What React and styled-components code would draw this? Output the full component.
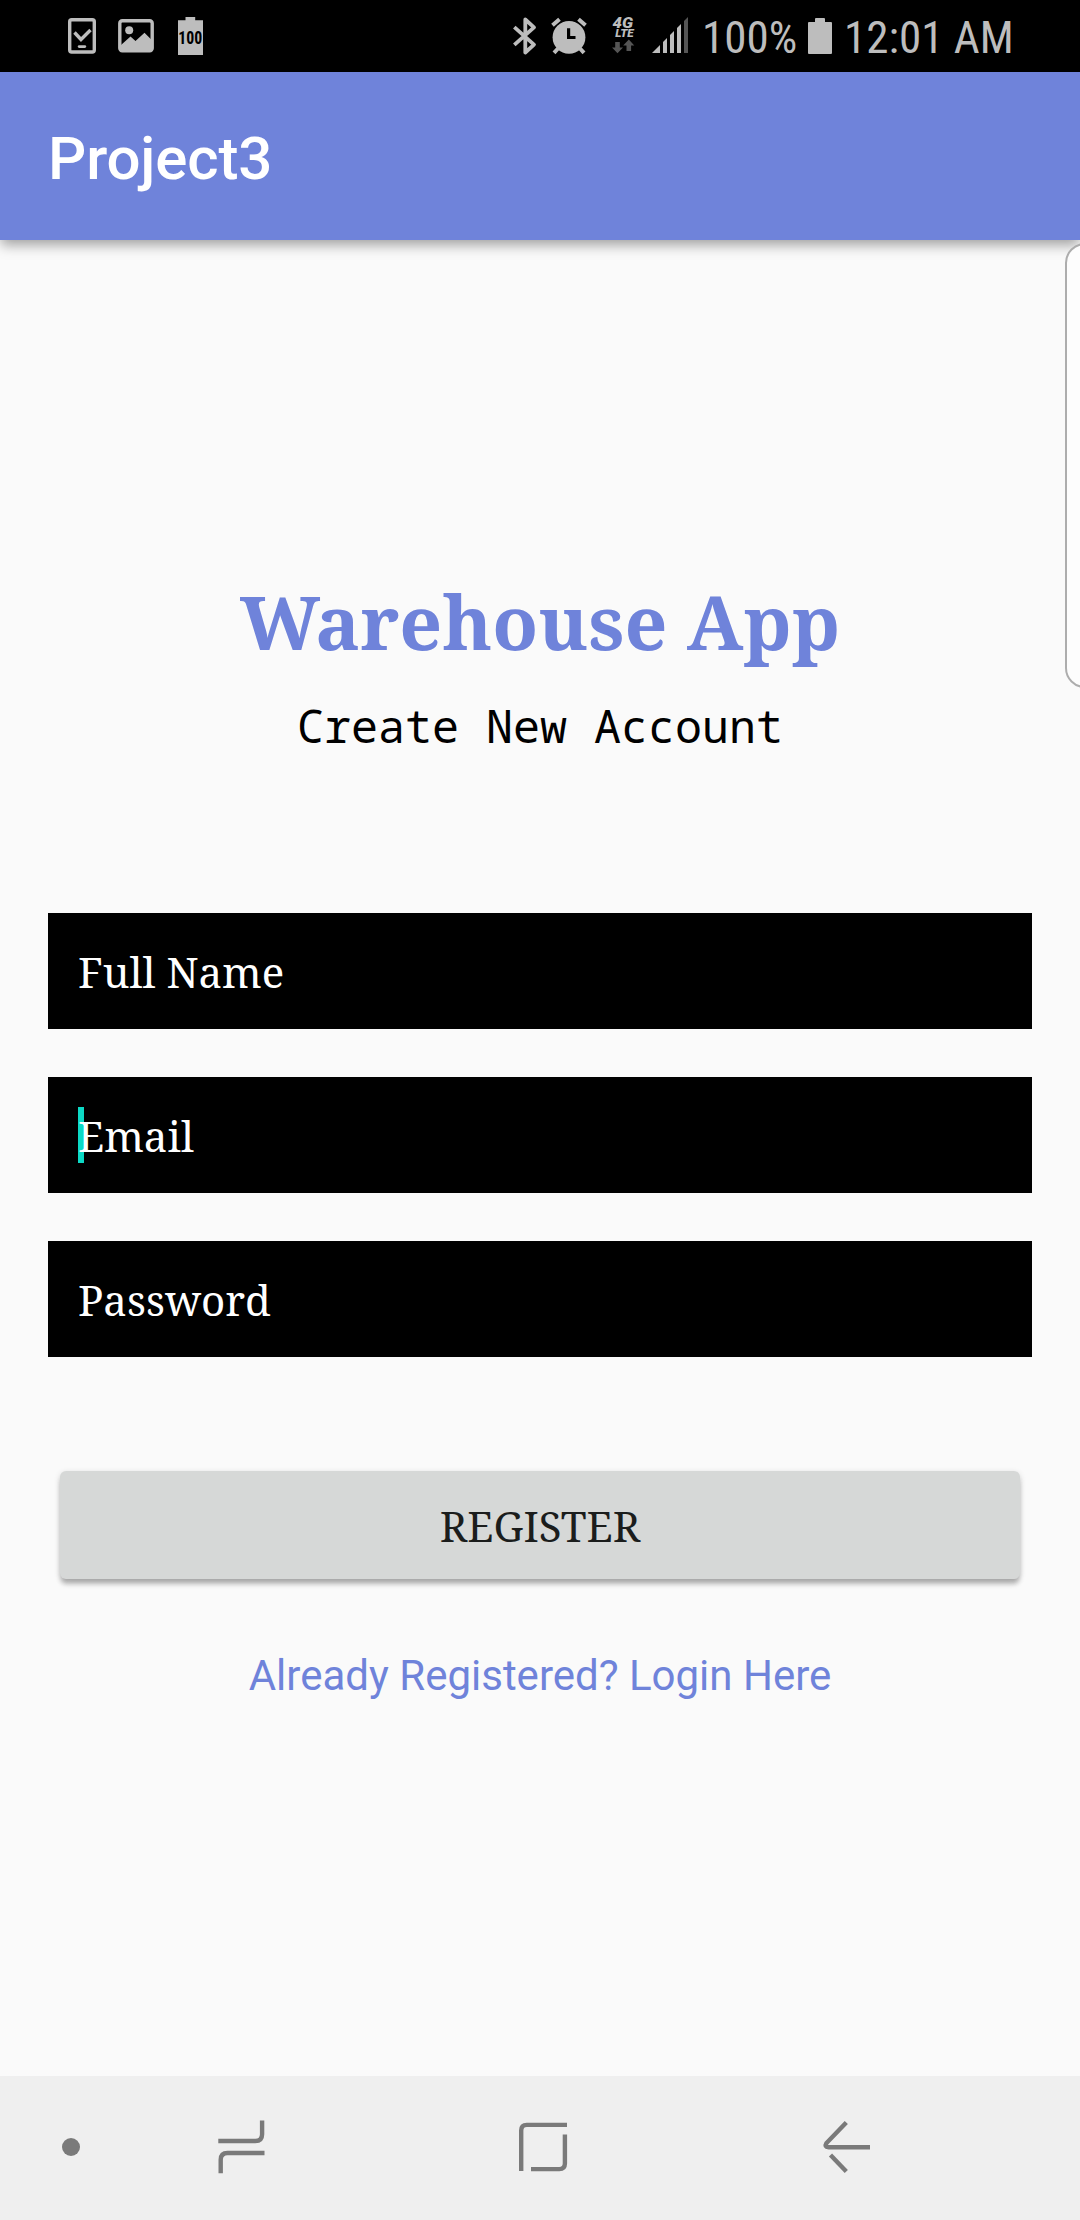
import React from 'react';
import styled, { createGlobalStyle } from 'styled-components';

const GlobalStyle = createGlobalStyle`
  *, *::before, *::after { box-sizing: border-box; }
  body { margin: 0; background: #fafafa; }
`;

const Screen = styled.div`
  position: relative;
  display: flex;
  flex-direction: column;
  width: 1080px;
  height: 2220px;
  overflow: hidden;
  background: #fafafa;
  font-family: Roboto, sans-serif;
`;

const StatusBar = styled.header`
  display: flex;
  justify-content: space-between;
  height: 72px;
  padding: 0 66px 0 68px;
  background: #000;
  color: #bdbdbd;
`;

const StatusGroup = styled.div`
  display: flex;
  align-items: flex-start;
`;

const StatusIcon = styled.svg`
  display: block;
  flex: none;
  overflow: visible;
  width: ${(p) => p.$width}px;
  height: 72px;
  margin-left: ${(p) => p.$gap || 0}px;
`;

const StatusText = styled.span`
  width: ${(p) => p.$width}px;
  margin-left: ${(p) => p.$gap || 0}px;
  font: 400 45px/75px 'Roboto Condensed', Roboto, sans-serif;
  white-space: nowrap;
`;

const AppBar = styled.div`
  z-index: 1;
  display: flex;
  align-items: center;
  flex: none;
  height: 168px;
  padding: 5px 48px 0;
  background: #6f83da;
  box-shadow: 0 6px 12px -1px rgba(0, 0, 0, 0.36);
`;

const AppTitle = styled.h1`
  margin: 0;
  color: #fff;
  font-size: 60px;
  font-weight: 500;
  line-height: 70px;
  letter-spacing: -0.15px;
`;

const Content = styled.main`
  display: flex;
  flex-direction: column;
  flex: 1;
  padding: 330px 48px 0;
`;

const Brand = styled.h2`
  margin: 0;
  color: #6f83da;
  font: 700 75px/102px 'Noto Serif', serif;
  text-align: center;
`;

const Subtitle = styled.p`
  margin: 23px 0 0;
  color: #000;
  font: 400 45px/61px 'Noto Sans Mono', 'DejaVu Sans Mono', monospace;
  text-align: center;
`;

const Form = styled.form`
  display: flex;
  flex-direction: column;
  gap: 48px;
  margin-top: 157px;
`;

const Field = styled.div`
  position: relative;
  height: 116px;
  padding: 0 30px;
  background: #000;
  color: #fff;
  font: 400 42px/117px 'Noto Serif', serif;
`;

const Caret = styled.i`
  position: absolute;
  top: 30px;
  left: 30px;
  width: 6px;
  height: 56px;
  background: #0cd9c5;
`;

const FieldLabel = styled.span`
  position: relative;
`;

const RegisterButton = styled.button`
  height: 108px;
  margin: 66px 12px 0;
  padding: 1px 0 0;
  border: 0;
  border-radius: 6px;
  background: #d6d8d7;
  box-shadow: 0 6px 5px -1px rgba(0, 0, 0, 0.24), 0 2px 6px rgba(0, 0, 0, 0.16);
  color: #1b1d1c;
  font: 400 42px/57px 'Noto Serif', serif;
`;

const LoginLink = styled.a`
  margin-top: 72px;
  color: #6f83da;
  font-size: 42px;
  line-height: 49px;
  text-align: center;
`;

const EdgePanel = styled.aside`
  position: absolute;
  z-index: 2;
  top: 243px;
  left: 1065px;
  width: 60px;
  height: 445px;
  border: 2px solid #adadad;
  border-radius: 20px;
  background: #fdfdfd;
`;

const NavBar = styled.nav`
  display: flex;
  align-items: center;
  flex: none;
  height: 144px;
  padding-left: 62px;
  background: #efefef;
  color: #7a7a7a;
`;

const NavDot = styled.span`
  width: 18px;
  height: 18px;
  margin-top: -2px;
  border-radius: 50%;
  background: currentColor;
`;

const NavIcon = styled.svg`
  display: block;
  width: 60px;
  height: 60px;
  margin-left: ${(p) => p.$gap}px;
  fill: none;
  stroke: currentColor;
  stroke-width: 4.4;
`;

const BadgeText = styled.text`
  font: ${(p) => p.$font};
`;

function TaskIcon() {
  return (
    <StatusIcon $width={28} viewBox="0 0 28 72" fill="none" stroke="currentColor">
      <rect x="1.7" y="19.7" width="24.6" height="32.3" rx="2" strokeWidth="3.4" />
      <path d="M6.5 32.5l6.5 7 9.5-9.5" strokeWidth="3.4" />
      <path d="M11.2 46.6h5.6" strokeWidth="2.8" strokeLinecap="round" />
    </StatusIcon>
  );
}

function PictureIcon() {
  return (
    <StatusIcon $width={36} $gap={22} viewBox="0 0 36 72">
      <rect x="1.8" y="20.7" width="32.4" height="30" rx="2.5" fill="none" stroke="currentColor" strokeWidth="3.4" />
      <circle cx="11.2" cy="30.3" r="4" fill="currentColor" />
      <path d="M3 45l9.5-8.5 5 4.5 9-8.3 7 7V51H3z" fill="currentColor" />
    </StatusIcon>
  );
}

function FullBatteryIcon() {
  return (
    <StatusIcon $width={25} $gap={24} viewBox="0 0 25 72">
      <path d="M7.5 17h9.7v3.3H25V55H0V20.3h7.5z" fill="currentColor" />
      <BadgeText x="12.3" y="44.2" textAnchor="middle" textLength="24" lengthAdjust="spacingAndGlyphs" $font="700 17.5px 'Roboto Condensed', Roboto, sans-serif" fill="#000">
        100
      </BadgeText>
    </StatusIcon>
  );
}

function BluetoothIcon() {
  return (
    <StatusIcon $width={24} viewBox="0 0 24 72" fill="none" stroke="currentColor" strokeWidth="3.8">
      <path d="M1.3 27.2L21 44.6 12.3 52.5V19.5L21 27.4 1.3 44.8" strokeLinejoin="round" />
    </StatusIcon>
  );
}

function AlarmIcon() {
  return (
    <StatusIcon $width={36} $gap={14} viewBox="0 0 36 72">
      <circle cx="18" cy="37.3" r="16.4" fill="currentColor" />
      <g stroke="currentColor" strokeWidth="4">
        <path d="M1.5 25.2l7-6M34.5 25.2l-7-6M7 48.5l-4 4.3M29 48.5l4 4.3" />
      </g>
      <path d="M17.6 28.2v9.3h6.9" fill="none" stroke="#000" strokeWidth="3.2" />
    </StatusIcon>
  );
}

function NetworkIcon() {
  return (
    <StatusIcon $width={24} $gap={25} viewBox="0 0 24 72" fill="currentColor">
      <BadgeText x="0.5" y="27.8" textLength="20.5" lengthAdjust="spacingAndGlyphs" $font="italic 900 15px Roboto, sans-serif">
        4G
      </BadgeText>
      <BadgeText x="3.2" y="37" textLength="18.5" lengthAdjust="spacingAndGlyphs" $font="italic 900 11.5px Roboto, sans-serif">
        LTE
      </BadgeText>
      <path d="M3.2 42h4.6v5.4h3.2L5.500 53.200 0 47.400h3.200zM14.500 51h4.600v-5.400h3.200L16.800 39.600l-5.600 6h3.300z" fill="#555" />
    </StatusIcon>
  );
}

function SignalIcon() {
  return (
    <StatusIcon $width={36} $gap={16} viewBox="0 0 36 72">
      <path d="M0 53l8-8v8zM11 42l4-4v15h-4zM18 35l4-4v22h-4zM25 28l4-4v29h-4z" fill="currentColor" />
      <path d="M32 21l4-4v36h-4z" fill="#555" />
    </StatusIcon>
  );
}

function BatteryIcon() {
  return (
    <StatusIcon $width={24} $gap={11} viewBox="0 0 24 72">
      <path d="M8 18h8q1 0 1 1v3h6q1 0 1 1v30q0 1-1 1H1q-1 0-1-1V23q0-1 1-1h6v-3q0-1 1-1z" fill="currentColor" />
    </StatusIcon>
  );
}

const fields = ['Full Name', 'Email', 'Password'];
const focusedField = 'Email';

export default function App() {
  return (
    <Screen>
      <GlobalStyle />
      <StatusBar>
        <StatusGroup>
          <TaskIcon />
          <PictureIcon />
          <FullBatteryIcon />
        </StatusGroup>
        <StatusGroup>
          <BluetoothIcon />
          <AlarmIcon />
          <NetworkIcon />
          <SignalIcon />
          <StatusText $width={95} $gap={14}>100%</StatusText>
          <BatteryIcon />
          <StatusText $width={170} $gap={12}>12:01 AM</StatusText>
        </StatusGroup>
      </StatusBar>
      <AppBar>
        <AppTitle>Project3</AppTitle>
      </AppBar>
      <Content>
        <Brand>Warehouse App</Brand>
        <Subtitle>Create New Account</Subtitle>
        <Form>
          {fields.map((name) => (
            <Field key={name}>
              {name === focusedField && <Caret />}
              <FieldLabel>{name}</FieldLabel>
            </Field>
          ))}
          <RegisterButton type="button">REGISTER</RegisterButton>
        </Form>
        <LoginLink>Already Registered? Login Here</LoginLink>
      </Content>
      <EdgePanel />
      <NavBar>
        <NavDot />
        <NavIcon $gap={131} viewBox="211 2118 60 60">
          <path d="M218.3 2141h37q6.8 0 6.8-6.8v-13.7" />
          <path d="M264.5 2153h-37q-6.8 0-6.8 6.8v13.5" />
        </NavIcon>
        <NavIcon $gap={242} viewBox="513 2118 60 60">
          <path d="M521.2 2171v-40.5q0-5.600 5.600-5.600H567" />
          <path d="M564.9 2134.5v29q0 5.600-5.600 5.600H531" />
        </NavIcon>
        <NavIcon $gap={242} viewBox="815 2118 60 60">
          <path d="M846.3 2122.5l-19.8 20.5q-2.5 4.2 2 4.2H870" />
          <path d="M830.5 2155l15.8 16.5" />
        </NavIcon>
      </NavBar>
    </Screen>
  );
}
